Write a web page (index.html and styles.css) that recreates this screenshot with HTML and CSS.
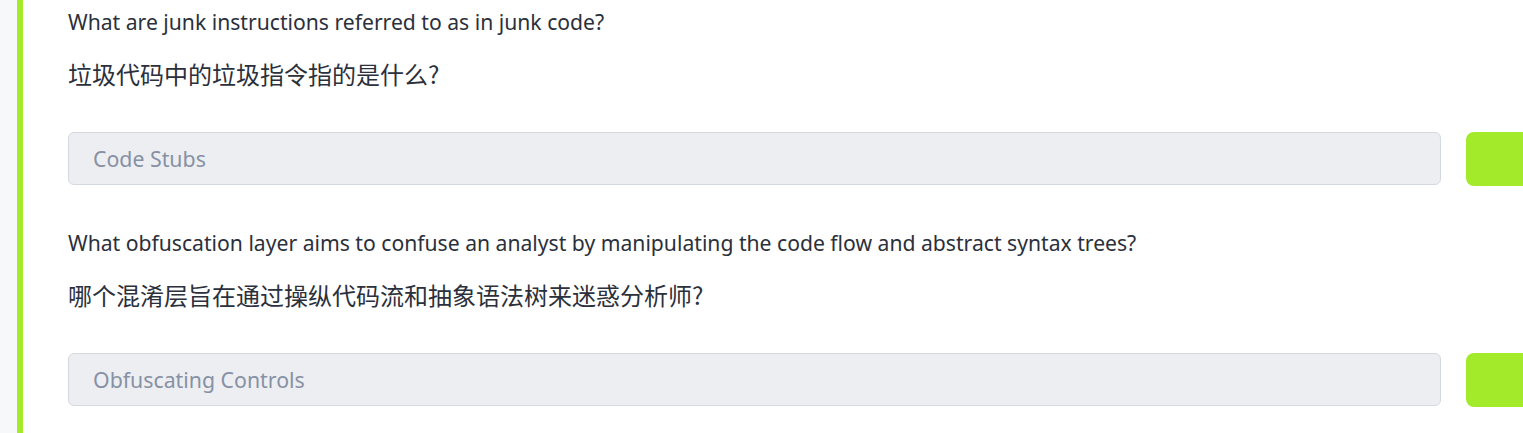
FILE: index.html
```html
<!DOCTYPE html>
<html>
<head>
<meta charset="utf-8">
<link rel="stylesheet" href="styles.css">
</head>
<body>
<div class="page">
  <div class="gutter"></div>
  <div class="task">
    <div class="qa">
      <p class="q-en">What are junk instructions referred to as in junk code?</p>
      <p class="q-zh">垃圾代码中的垃圾指令指的是什么?</p>
      <div class="answer-row">
        <div class="answer">Code Stubs</div>
        <div class="submit"></div>
      </div>
    </div>
    <div class="qa">
      <p class="q-en">What obfuscation layer aims to confuse an analyst by manipulating the code flow and abstract syntax trees?</p>
      <p class="q-zh">哪个混淆层旨在通过操纵代码流和抽象语法树来迷惑分析师?</p>
      <div class="answer-row">
        <div class="answer">Obfuscating Controls</div>
        <div class="submit"></div>
      </div>
    </div>
  </div>
</div>
</body>
</html>
```
FILE: styles.css
```css
html, body {
  margin: 0;
  padding: 0;
  background: #ffffff;
  overflow: hidden;
}
.page {
  display: flex;
  height: 433px;
  font-family: "Noto Sans", "Noto Sans CJK SC", sans-serif;
}
.gutter {
  width: 17px;
  background: #f7f8fa;
  flex: none;
}
.task {
  flex: 1;
  border-left: 6px solid #a3eb2a;
  padding-left: 45px;
  padding-top: 7px;
  overflow: hidden;
}
.qa {
  display: flex;
  flex-direction: column;
  padding-bottom: 42px;
}
.q-en {
  margin: 0;
  font-size: 21.15px;
  line-height: 30px;
  color: #2b303b;
  white-space: nowrap;
}
.q-zh {
  margin: 21px 0 0 0;
  font-size: 24px;
  line-height: 32px;
  color: #2b303b;
  font-family: "Noto Sans CJK SC", sans-serif;
  white-space: nowrap;
}
.answer-row {
  display: flex;
  align-items: flex-start;
  margin-top: 42px;
  gap: 25px;
}
.answer {
  flex: none;
  width: 1373px;
  height: 53px;
  box-sizing: border-box;
  border: 1px solid #d4d8df;
  border-radius: 6px;
  background: #eceef2;
  color: #8791a3;
  font-size: 21.3px;
  padding-left: 24px;
  display: flex;
  align-items: center;
}
.submit {
  flex: none;
  width: 80px;
  height: 54px;
  background: #a3eb2a;
  border-radius: 8px;
}
```
